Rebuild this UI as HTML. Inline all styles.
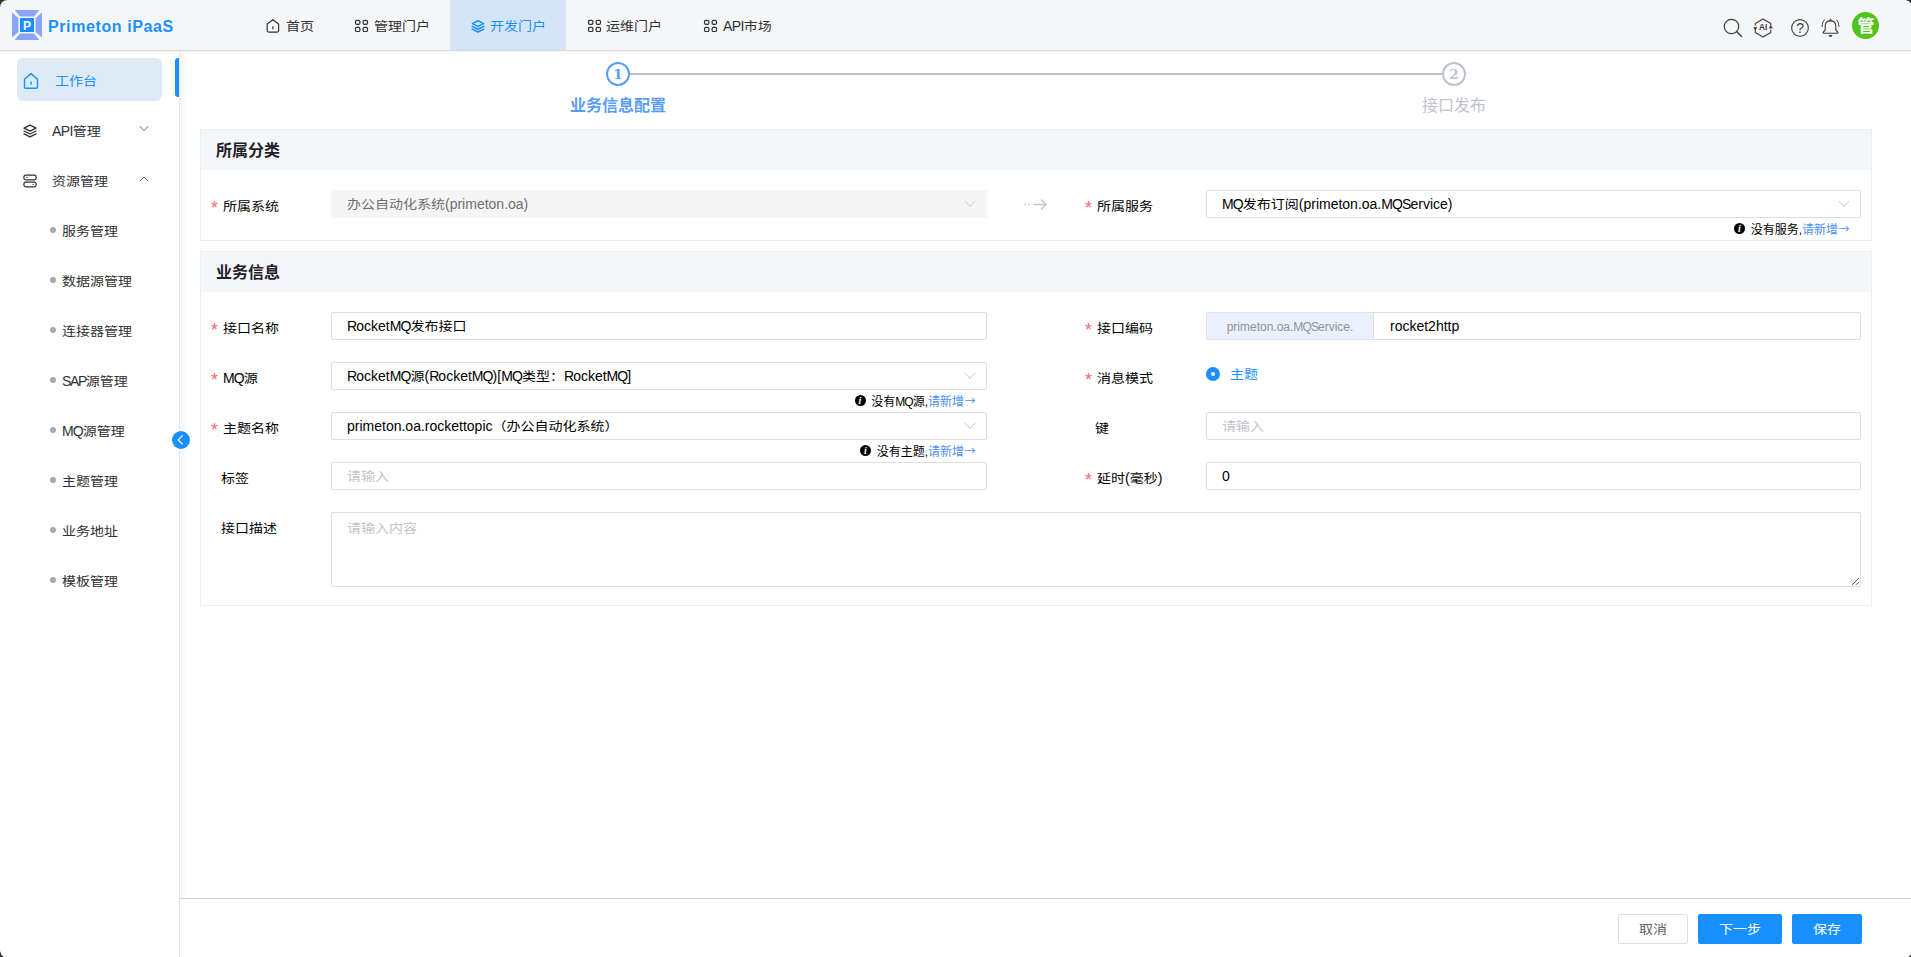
<!DOCTYPE html>
<html lang="zh-CN">
<head>
<meta charset="utf-8">
<title>Primeton iPaaS</title>
<style>
html,body{margin:0;padding:0}
body{width:1911px;height:957px;position:relative;overflow:hidden;background:#fff;font-family:"Liberation Sans","Noto Sans CJK SC",sans-serif;font-size:14px;color:#000;line-height:20px}
div,span,a{box-sizing:border-box}
.a{position:absolute;white-space:nowrap}
svg{position:absolute;overflow:visible}
/* header */
#hd{left:0;top:0;width:1911px;height:50px;background:#f5f6f8}
#hdline{left:0;top:50px;width:1911px;height:1px;background:#dbdbdc}
#hdsh{left:0;top:51px;width:1911px;height:1px;background:#f3f4f8}
.nav{top:0;height:50px;line-height:50px;color:#303133;font-size:14px}
.nav.on{background:#d5e5f8;color:#3a8ff7}
.nt{top:16px;height:20px;line-height:20px;font-size:14px;color:#303133}
/* sidebar */
#sbline{left:179px;top:51px;width:1px;height:906px;background:#e6e6e7}
#sbsh{left:180px;top:51px;width:7px;height:847px;background:linear-gradient(90deg,#f6f6f6,#fff)}
.mi{left:52px;height:20px;line-height:20px;font-size:14px;color:#303133}
.si{left:62px;height:20px;line-height:20px;font-size:14px;color:#303133}
.dot{left:50px;width:6px;height:6px;border-radius:50%;background:#a8a8a8}
/* panels */
.panel{left:200px;width:1672px;border:1px solid #ebeef5;background:#fff}
.ph{left:201px;width:1670px;height:40px;background:#f5f6fa}
.pt{left:216px;font-size:16px;font-weight:bold;line-height:22px;height:22px;color:#1f2329}
.lb{height:20px;line-height:20px;font-size:14px;color:#000}
.req{color:#f56c6c;font-size:18px;height:20px;line-height:20px}
.inp{height:28px;border:1px solid #dcdfde;border-radius:2px;background:#fff}
.it{height:20px;line-height:20px;font-size:14px;color:#000}
.ph2{color:#c0c4cc}
.hint{margin-right:1.8px;height:16px;line-height:16px;font-size:12px;color:#000}
.hint a{color:#4a90f5;text-decoration:none}
.ii{display:inline-block;width:11px;height:11px;border-radius:50%;background:#000;vertical-align:2px;margin-right:5.5px;position:relative;color:#fff;font-family:"Liberation Serif",serif;font-style:italic;font-weight:bold;font-size:10px;line-height:11px;text-align:center;text-indent:-0.5px}
.ar{font-family:"Noto Sans CJK SC",sans-serif;font-size:11px;line-height:0;color:#4a90f5;margin-left:0.3px;margin-right:-1.2px;position:relative;top:-0.4px}
.u{letter-spacing:-0.9px}
.c{display:inline-block;transform:translateY(1px) scaleY(0.885);transform-origin:50% 52%}
.btn{top:914px;height:30px;line-height:28px;font-size:14px;text-align:center;border-radius:2px}
</style>
</head>
<body>
<!-- HEADER -->
<div class="a" id="hd"></div>
<div class="a" id="hdline"></div>
<svg class="a" style="left:12px;top:10px" width="30" height="30" viewBox="0 0 30 30">
<path d="M2.6 0H27.4L22 6.5H8Z" fill="#8aa5f8"/>
<path d="M2.6 30H27.4L22 23.5H8Z" fill="#8aa5f8"/>
<path d="M0 2.6V27.4L6.4 22V8Z" fill="#8aa5f8"/>
<path d="M30 2.6V27.4L23.6 22V8Z" fill="#8aa5f8"/>
<rect x="8" y="8" width="14" height="14" fill="#1890ff"/>
<text x="15" y="19.6" font-family="Liberation Sans, sans-serif" font-weight="bold" font-size="12" fill="#fff" text-anchor="middle">P</text>
</svg>
<div class="a" style="left:48px;top:15px;height:24px;line-height:24px;font-size:16px;font-weight:bold;color:#1890ff;letter-spacing:0.6px">Primeton iPaaS</div>
<div class="a" style="left:0;top:0;width:7px;height:7px;background:radial-gradient(circle at 7px 7px,rgba(51,51,51,0) 6.3px,#333 7.3px)"></div>
<div class="a" style="left:1905px;top:0;width:6px;height:4px;background:radial-gradient(ellipse 6px 4px at 0 4px,rgba(51,51,51,0) 88%,#333 100%)"></div>
<div class="a" style="left:0;top:950px;width:4px;height:7px;background:radial-gradient(ellipse 4px 7px at 4px 0,rgba(51,51,51,0) 88%,#333 100%);z-index:9"></div>
<div class="a" style="left:1908px;top:954px;width:3px;height:3px;background:radial-gradient(ellipse 3px 3px at 0 0,rgba(51,51,51,0) 80%,#333 100%);z-index:9"></div>

<div class="a" style="left:450px;top:0;width:116px;height:50px;background:#d5e5f8"></div>
<svg class="a" style="left:266px;top:19px" width="14" height="14" viewBox="0 0 14 14"><path d="M1.2 5.1L6.9 0.8L12.6 5.1V11.6Q12.6 13.1 11.1 13.1H2.7Q1.2 13.1 1.2 11.6Z" fill="none" stroke="#303133" stroke-width="1.2" stroke-linejoin="round"/><path d="M6.9 7.2V10.3" stroke="#303133" stroke-width="1.2" fill="none"/></svg>
<div class="a nt" style="left:286px;color:#303133"><span class="c">首页</span></div>
<svg class="a" style="left:354px;top:19px" width="14" height="14" viewBox="0 0 14 14"><rect x="1.5" y="1.3" width="4.4" height="4.1" rx="1.3" fill="none" stroke="#303133" stroke-width="1.2"/><rect x="9.1" y="1.3" width="4.4" height="4.1" rx="1.3" fill="none" stroke="#303133" stroke-width="1.2"/><rect x="1.5" y="8.4" width="4.4" height="4.1" rx="1.3" fill="none" stroke="#303133" stroke-width="1.2"/><rect x="9.1" y="8.4" width="4.4" height="4.1" rx="1.3" fill="none" stroke="#303133" stroke-width="1.2"/></svg>
<div class="a nt" style="left:374px;color:#303133"><span class="c">管理门户</span></div>
<svg class="a" style="left:471px;top:19px" width="14" height="14" viewBox="0 0 14 14"><path d="M7 1.8L12.6 4.6L7 7.4L1.4 4.6Z" fill="none" stroke="#1890ff" stroke-width="1.6" stroke-linejoin="round"/><path d="M1.2 7.4L7 10.3L12.8 7.4" fill="none" stroke="#1890ff" stroke-width="1.6" stroke-linejoin="round" stroke-linecap="round"/><path d="M1.2 10.1L7 13L12.8 10.1" fill="none" stroke="#1890ff" stroke-width="1.6" stroke-linejoin="round" stroke-linecap="round"/></svg>
<div class="a nt" style="left:490px;color:#1890ff"><span class="c">开发门户</span></div>
<svg class="a" style="left:587px;top:19px" width="14" height="14" viewBox="0 0 14 14"><rect x="1.5" y="1.3" width="4.4" height="4.1" rx="1.3" fill="none" stroke="#303133" stroke-width="1.2"/><rect x="9.1" y="1.3" width="4.4" height="4.1" rx="1.3" fill="none" stroke="#303133" stroke-width="1.2"/><rect x="1.5" y="8.4" width="4.4" height="4.1" rx="1.3" fill="none" stroke="#303133" stroke-width="1.2"/><rect x="9.1" y="8.4" width="4.4" height="4.1" rx="1.3" fill="none" stroke="#303133" stroke-width="1.2"/></svg>
<div class="a nt" style="left:606px;color:#303133"><span class="c">运维门户</span></div>
<svg class="a" style="left:703px;top:19px" width="14" height="14" viewBox="0 0 14 14"><rect x="1.5" y="1.3" width="4.4" height="4.1" rx="1.3" fill="none" stroke="#303133" stroke-width="1.2"/><rect x="9.1" y="1.3" width="4.4" height="4.1" rx="1.3" fill="none" stroke="#303133" stroke-width="1.2"/><rect x="1.5" y="8.4" width="4.4" height="4.1" rx="1.3" fill="none" stroke="#303133" stroke-width="1.2"/><rect x="9.1" y="8.4" width="4.4" height="4.1" rx="1.3" fill="none" stroke="#303133" stroke-width="1.2"/></svg>
<div class="a nt" style="left:723px;color:#303133"><span style="letter-spacing:-0.6px">API</span><span class="c">市场</span></div>

<svg class="a" style="left:1722px;top:17px" width="22" height="22" viewBox="0 0 22 22"><circle cx="9.5" cy="9.5" r="7.2" fill="none" stroke="#3c3c3c" stroke-width="1.2"/><path d="M14.8 14.8L19.6 19.6" stroke="#3c3c3c" stroke-width="1.4" stroke-linecap="round"/></svg>
<svg class="a" style="left:1753px;top:18px" width="20" height="20" viewBox="0 0 20 20"><path d="M2.3 7.6V5.5L10 1.1L17.8 5.5V7.8M17.8 11.8V14.5L10 18.9L2.3 14.5V12" fill="none" stroke="#3c3c3c" stroke-width="1.1" stroke-linejoin="round"/><path d="M0.4 9.2H4.2L2.3 12.9Z" fill="#3c3c3c"/><path d="M15.9 10.6H19.7L17.8 6.9Z" fill="#3c3c3c"/><text x="10.1" y="12.4" font-family="Liberation Sans, sans-serif" font-weight="bold" font-size="8.2" fill="#3c3c3c" text-anchor="middle">AI</text></svg>
<svg class="a" style="left:1790px;top:18px" width="20" height="20" viewBox="0 0 20 20"><circle cx="10" cy="9.95" r="8.35" fill="none" stroke="#3c3c3c" stroke-width="1.1"/><text x="10.1" y="15" font-family="Liberation Sans, sans-serif" font-size="14" fill="#3c3c3c" text-anchor="middle">?</text></svg>
<svg class="a" style="left:1820px;top:18px" width="20" height="20" viewBox="0 0 20 20"><path d="M5.2 11.8V8.2Q5.2 2.9 10.5 2.9Q15.8 2.9 15.8 8.2V11.8L17.9 14.4Q18.2 15.2 17.3 15.2H3.7Q2.8 15.2 3.1 14.4Z" fill="none" stroke="#3c3c3c" stroke-width="1.1" stroke-linejoin="round"/><circle cx="10.5" cy="1.9" r="0.8" fill="none" stroke="#3c3c3c" stroke-width="0.9"/><path d="M8.6 17H12.4Q12.2 18.9 10.5 18.9Q8.8 18.9 8.6 17Z" fill="#3c3c3c"/><path d="M4.2 1.9Q1.9 4.6 2 8.6M16.8 1.9Q19.1 4.6 19 8.6" fill="none" stroke="#3c3c3c" stroke-width="0.9" stroke-linecap="round"/></svg>
<div class="a" style="left:1852px;top:12px;width:27px;height:27px;border-radius:50%;background:#52c41a"></div>
<div class="a" style="left:1852.5px;top:13px;width:27px;height:27px;line-height:28px;text-align:center;color:#fff;font-size:17px;font-weight:bold">管</div>

<!-- SIDEBAR -->
<div class="a" id="sbline"></div>
<div class="a" id="sbsh"></div>
<div class="a" id="hdsh"></div>
<div class="a" style="left:17px;top:58px;width:145px;height:43px;border-radius:6px;background:#dfeaf7"></div>
<div class="a" style="left:175px;top:58px;width:4px;height:39px;border-radius:3px 0 0 3px;background:#1890ff"></div>
<svg class="a" style="left:23px;top:72px" width="16" height="18" viewBox="0 0 16 18"><path d="M1.5 7.2L8 1.6L14.5 7.2V15Q14.5 16.3 13.2 16.3H2.8Q1.5 16.3 1.5 15Z" fill="none" stroke="#1890ff" stroke-width="1.4" stroke-linejoin="round"/><path d="M8 9.6V12.4" stroke="#1890ff" stroke-width="1.5"/></svg>
<div class="a mi" style="left:55px;top:71px;color:#1890ff"><span class="c">工作台</span></div>
<svg class="a" style="left:23px;top:124px" width="14" height="14" viewBox="0 0 14 14"><path d="M7 1.2L13 4.2L7 7.2L1 4.2Z" fill="none" stroke="#303133" stroke-width="1.3" stroke-linejoin="round"/><path d="M1 7L7 10L13 7M1 9.8L7 12.8L13 9.8" fill="none" stroke="#303133" stroke-width="1.3" stroke-linejoin="round" stroke-linecap="round"/></svg>
<div class="a mi" style="top:121px"><span style="letter-spacing:-0.6px">API</span><span class="c">管理</span></div>
<svg class="a" style="left:139px;top:125px" width="10" height="8" viewBox="0 0 10 8"><path d="M0.8 1.3L5 5.5L9.2 1.3" fill="none" stroke="#5f6470" stroke-width="1"/></svg>
<svg class="a" style="left:23px;top:174px" width="14" height="14" viewBox="0 0 14 14"><rect x="0.9" y="1.2" width="12.2" height="4.6" rx="1.8" fill="none" stroke="#303133" stroke-width="1.25"/><rect x="0.9" y="8.2" width="12.2" height="4.6" rx="1.8" fill="none" stroke="#303133" stroke-width="1.25"/><path d="M9.6 10.5H10.8M3.2 3.5H4.4" stroke="#303133" stroke-width="1.1"/></svg>
<div class="a mi" style="top:171px"><span class="c">资源管理</span></div>
<svg class="a" style="left:139px;top:175px" width="10" height="8" viewBox="0 0 10 8"><path d="M0.8 6.2L5 2L9.2 6.2" fill="none" stroke="#5f6470" stroke-width="1"/></svg>
<div class="a dot" style="top:227px"></div><div class="a si" style="top:221px"><span class="c">服务管理</span></div>
<div class="a dot" style="top:277px"></div><div class="a si" style="top:271px"><span class="c">数据源管理</span></div>
<div class="a dot" style="top:327px"></div><div class="a si" style="top:321px"><span class="c">连接器管理</span></div>
<div class="a dot" style="top:377px"></div><div class="a si" style="top:371px"><span style="letter-spacing:-1.4px">SAP</span><span class="c">源管理</span></div>
<div class="a dot" style="top:427px"></div><div class="a si" style="top:421px"><span class="u">MQ</span><span class="c">源管理</span></div>
<div class="a dot" style="top:477px"></div><div class="a si" style="top:471px"><span class="c">主题管理</span></div>
<div class="a dot" style="top:527px"></div><div class="a si" style="top:521px"><span class="c">业务地址</span></div>
<div class="a dot" style="top:577px"></div><div class="a si" style="top:571px"><span class="c">模板管理</span></div>
<div class="a" style="left:172px;top:431px;width:18px;height:18px;border-radius:50%;background:#1890ff"></div>
<svg class="a" style="left:172px;top:431px" width="18" height="18" viewBox="0 0 18 18"><path d="M10.6 4.4L6.2 8.9L10.6 13.4" fill="none" stroke="#fff" stroke-width="1.2"/></svg>

<div class="a" style="left:630px;top:73px;width:812px;height:2px;background:#b9bfcb"></div>
<div class="a" style="left:606px;top:62px;width:24px;height:24px;border:2px solid #5b9cf7;border-radius:50%;background:#fff"></div>
<div class="a" style="left:606px;top:62px;width:24px;height:24px;line-height:24px;text-align:center;font-family:'DejaVu Serif',serif;font-weight:bold;font-size:13.5px;color:#5b9cf7">1</div>
<div class="a" style="left:1442px;top:62px;width:24px;height:24px;border:2px solid #bcc3cf;border-radius:50%;background:#fff"></div>
<div class="a" style="left:1442px;top:62px;width:24px;height:24px;line-height:24px;text-align:center;font-family:'DejaVu Serif',serif;font-weight:bold;font-size:13.5px;color:#bcc3cf">2</div>
<div class="a" style="left:518px;top:95px;width:200px;height:22px;line-height:22px;text-align:center;font-size:16px;font-weight:bold;color:#5b9cf7">业务信息配置</div>
<div class="a" style="left:1354px;top:95px;width:200px;height:22px;line-height:22px;text-align:center;font-size:16px;color:#c0c4cc">接口发布</div>

<div class="a panel" style="top:129px;height:112px"></div>
<div class="a ph" style="top:130px"></div>
<div class="a pt" style="top:139.5px">所属分类</div>
<div class="a req" style="left:211px;top:197.8px">*</div><div class="a lb" style="left:223px;top:196px"><span class="c">所属系统</span></div>
<div class="a inp" style="left:331px;top:190px;width:656px;background:#f5f5f5;border-color:#f5f5f5"></div><div class="a it" style="left:347px;top:194px;color:#6e6e6e"><span class="c">办公自动化系统</span>(primeton.oa)</div>
<svg class="a" style="left:964px;top:200px" width="12" height="8" viewBox="0 0 12 8"><path d="M0.7 1L6 6.4L11.3 1" fill="none" stroke="#c0c4cc" stroke-width="1"/></svg>
<svg class="a" style="left:1023px;top:198px" width="26" height="14" viewBox="0 0 26 14"><path d="M10.5 6.5H23M18 1.5L23.3 6.5L18 11.5" fill="none" stroke="#c0c4cc" stroke-width="1.3"/><rect x="1.5" y="5.8" width="1.6" height="1.4" fill="#c0c4cc"/><rect x="5.3" y="5.8" width="1.6" height="1.4" fill="#c0c4cc"/></svg>
<div class="a req" style="left:1085px;top:197.8px">*</div><div class="a lb" style="left:1097px;top:196px"><span class="c">所属服务</span></div>
<div class="a inp" style="left:1206px;top:190px;width:655px;background:#fff;border-color:#dcdfde"></div><div class="a it" style="left:1222px;top:194px;color:#000"><span class="u">MQ</span><span class="c">发布订阅</span>(primeton.oa.<span class="u">MQS</span>ervice)</div>
<svg class="a" style="left:1838px;top:200px" width="12" height="8" viewBox="0 0 12 8"><path d="M0.7 1L6 6.4L11.3 1" fill="none" stroke="#c0c4cc" stroke-width="1"/></svg>
<div class="a hint" style="right:61px;top:221.5px"><span class="ii">i</span>没有服务,<a>请新增</a><span class="ar">→</span></div>

<div class="a panel" style="top:251px;height:355px"></div>
<div class="a ph" style="top:252px"></div>
<div class="a pt" style="top:261.5px">业务信息</div>
<div class="a req" style="left:211px;top:319.8px">*</div><div class="a lb" style="left:223px;top:318px"><span class="c">接口名称</span></div>
<div class="a inp" style="left:331px;top:312px;width:656px;background:#fff;border-color:#dcdfde"></div><div class="a it" style="left:347px;top:316px;color:#000"><span class="u">R</span>ocket<span class="u">MQ</span><span class="c">发布接口</span></div>
<div class="a req" style="left:211px;top:369.8px">*</div><div class="a lb" style="left:223px;top:368px"><span class="u">MQ</span><span class="c">源</span></div>
<div class="a inp" style="left:331px;top:362px;width:656px;background:#fff;border-color:#dcdfde"></div><div class="a it" style="left:347px;top:366px;color:#000"><span class="u">R</span>ocket<span class="u">MQ</span><span class="c">源</span>(<span class="u">R</span>ocket<span class="u">MQ</span>)[<span class="u">MQ</span><span class="c">类型：</span><span class="u">R</span>ocket<span class="u">MQ</span>]</div>
<svg class="a" style="left:964px;top:372px" width="12" height="8" viewBox="0 0 12 8"><path d="M0.7 1L6 6.4L11.3 1" fill="none" stroke="#c0c4cc" stroke-width="1"/></svg>
<div class="a hint" style="right:935px;top:393.5px"><span class="ii">i</span>没有<span class="u">MQ</span>源,<a>请新增</a><span class="ar">→</span></div>
<div class="a req" style="left:211px;top:419.8px">*</div><div class="a lb" style="left:223px;top:418px"><span class="c">主题名称</span></div>
<div class="a inp" style="left:331px;top:412px;width:656px;background:#fff;border-color:#dcdfde"></div><div class="a it" style="left:347px;top:416px;color:#000">primeton.oa.rockettopic<span class="c">（办公自动化系统）</span></div>
<svg class="a" style="left:964px;top:422px" width="12" height="8" viewBox="0 0 12 8"><path d="M0.7 1L6 6.4L11.3 1" fill="none" stroke="#c0c4cc" stroke-width="1"/></svg>
<div class="a hint" style="right:935px;top:443.5px"><span class="ii">i</span>没有主题,<a>请新增</a><span class="ar">→</span></div>
<div class="a lb" style="left:221px;top:468px"><span class="c">标签</span></div>
<div class="a inp" style="left:331px;top:462px;width:656px;background:#fff;border-color:#dcdfde"></div><div class="a it ph2" style="left:347px;top:466px;"><span class="c">请输入</span></div>
<div class="a lb" style="left:221px;top:518px"><span class="c">接口描述</span></div>
<div class="a inp" style="left:331px;top:512px;width:1530px;height:75px;border-color:#dcdfe6"></div><div class="a it ph2" style="left:347px;top:518px"><span class="c">请输入内容</span></div>
<svg class="a" style="left:1849px;top:575px" width="10" height="10" viewBox="0 0 10 10"><path d="M3.2 9.8L10 3M7 9.8L10 6.8" stroke="#505050" stroke-width="1" fill="none"/></svg>
<div class="a req" style="left:1085px;top:319.8px">*</div><div class="a lb" style="left:1097px;top:318px"><span class="c">接口编码</span></div>
<div class="a inp" style="left:1206px;top:312px;width:655px"></div><div class="a" style="left:1206px;top:312px;width:168px;height:28px;background:#ebf0fe;border:1px solid #e0e3e8;border-right-color:#dcdfde;border-radius:2px 0 0 2px"></div><div class="a" style="left:1207px;top:317px;width:166px;height:20px;line-height:20px;text-align:center;font-size:12px;color:#909399">primeton.oa.<span class="u">MQS</span>ervice.</div><div class="a it" style="left:1390px;top:316px">rocket2http</div>
<div class="a req" style="left:1085px;top:369.8px">*</div><div class="a lb" style="left:1097px;top:368px"><span class="c">消息模式</span></div>
<div class="a" style="left:1206px;top:367px;width:14px;height:14px;border-radius:50%;background:#1890ff"></div><div class="a" style="left:1211px;top:372px;width:4px;height:4px;border-radius:50%;background:#fff"></div><div class="a it" style="left:1230px;top:364px;color:#1890ff"><span class="c">主题</span></div>
<div class="a lb" style="left:1095px;top:418px"><span class="c">键</span></div>
<div class="a inp" style="left:1206px;top:412px;width:655px;background:#fff;border-color:#dcdfde"></div><div class="a it ph2" style="left:1222px;top:416px;"><span class="c">请输入</span></div>
<div class="a req" style="left:1085px;top:469.8px">*</div><div class="a lb" style="left:1097px;top:468px"><span class="c">延时</span>(<span class="c">毫秒</span>)</div>
<div class="a inp" style="left:1206px;top:462px;width:655px;background:#fff;border-color:#dcdfde"></div><div class="a it" style="left:1222px;top:466px;color:#000">0</div>

<div class="a" style="left:180px;top:898px;width:1731px;height:1px;background:#d0d0d0"></div>
<div class="a btn" style="left:1618px;width:70px;border:1px solid #dcdfe6;color:#606266;background:#fff"><span class="c">取消</span></div>
<div class="a btn" style="left:1698px;width:84px;background:#1890ff;color:#fff;line-height:30px"><span class="c">下一步</span></div>
<div class="a btn" style="left:1792px;width:70px;background:#1890ff;color:#fff;line-height:30px"><span class="c">保存</span></div>

</body>
</html>
